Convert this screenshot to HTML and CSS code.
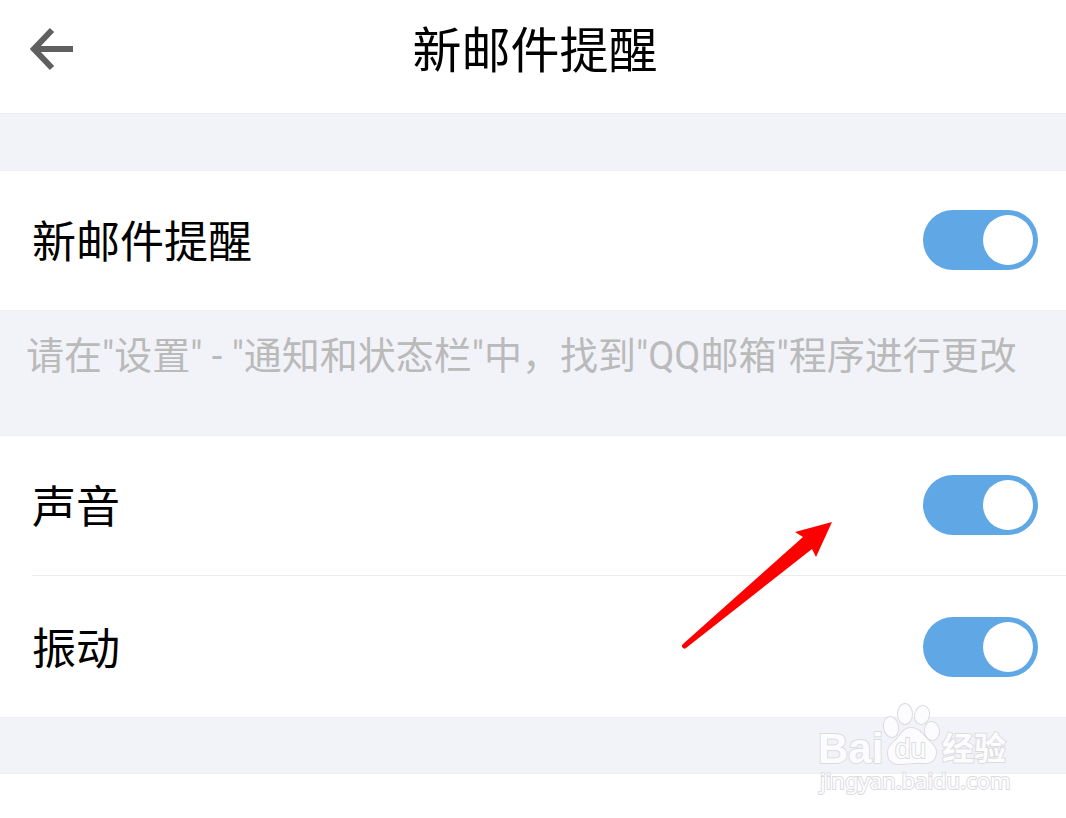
FILE: index.html
```html
<!DOCTYPE html>
<html lang="zh-CN">
<head>
<meta charset="utf-8">
<meta name="viewport" content="width=device-width, initial-scale=1">
<title>新邮件提醒</title>
<link rel="stylesheet" href="styles.css">
</head>
<body>
<div class="screen">
  <header class="header">
    <button class="back" type="button" aria-label="返回">
      <svg class="back-icon" viewBox="0 0 44 44" aria-hidden="true">
        <path d="M43 22H4M22 3L4 22l18 19" fill="none" stroke="#606060" stroke-width="6"/>
      </svg>
    </button>
    <h1 class="title">新邮件提醒</h1>
  </header>
  <main class="settings">
    <div class="band"></div>
    <div class="row">
      <label class="label" for="notify">新邮件提醒</label>
      <input class="switch" type="checkbox" id="notify" checked>
    </div>
    <p class="hint">请在"设置" - "通知和状态栏"中，找到"QQ邮箱"程序进行更改</p>
    <div class="row">
      <label class="label" for="sound">声音</label>
      <input class="switch" type="checkbox" id="sound" checked>
    </div>
    <div class="divider"></div>
    <div class="row row-last">
      <label class="label" for="vibrate">振动</label>
      <input class="switch" type="checkbox" id="vibrate" checked>
    </div>
    <div class="band band-end"></div>
  </main>
  <svg class="pointer" viewBox="0 0 152 128" aria-hidden="true">
    <path d="M151 0L114 10l8 5L2 122a2 2 0 0 0 3 4L131 27l4 8z" fill="#ff0000"/>
  </svg>
  <svg class="watermark" viewBox="0 0 200 100" role="img" aria-label="Baidu 经验">
    <g class="mark">
      <ellipse cx="75" cy="27" rx="7" ry="10" transform="rotate(-12 75 27)"/>
      <ellipse cx="89" cy="14" rx="7" ry="10"/>
      <ellipse cx="106" cy="15" rx="7" ry="9" transform="rotate(14 106 15)"/>
      <ellipse cx="116" cy="31" rx="7" ry="9" transform="rotate(-8 116 31)"/>
      <path d="M95 28c-7 0-10 6-14 11-5 5-9 7-9 14 0 8 5 11 12 11 8 0 15-2 22-1 9 1 14-3 14-11 0-6-5-9-10-14-4-5-8-10-15-10z"/>
      <text class="mark-bai" x="2" y="63">Bai</text>
      <text class="mark-du" x="79" y="58">du</text>
      <text class="mark-cn" x="126" y="60">经验</text>
      <text class="mark-url" x="4" y="89">jingyan.baidu.com</text>
    </g>
  </svg>
</div>
</body>
</html>
```
FILE: styles.css
```css
* {
  box-sizing: border-box;
}

body {
  margin: 0;
  background: #fff;
  color: #000;
  font-family: Roboto, "Noto Sans CJK SC", sans-serif;
}

.screen {
  position: relative;
  min-height: 100vh;
  overflow: hidden;
}

.header {
  display: grid;
  grid-template-columns: 1fr auto 1fr;
  align-items: center;
  padding: 0 26px 0 30px;
  height: 113px;
}

.back {
  display: flex;
  justify-self: start;
  margin-bottom: 16px;
  padding: 0;
  border: 0;
  background: none;
}

.back-icon {
  width: 44px;
  height: 44px;
}

.title {
  margin: 0 0 10px;
  font-size: 49px;
  font-weight: 400;
  line-height: 64px;
}

.band {
  height: 58px;
  background: #f2f3f8;
  border-top: 1px solid #eeeff0;
  border-bottom: 1px solid #eeeff0;
}

.band-end {
  height: 57px;
}

.row {
  display: flex;
  align-items: center;
  justify-content: space-between;
  padding: 0 28px 2px 32px;
  height: 139px;
}

.row-last {
  padding-bottom: 0;
  height: 141px;
}

.label {
  padding-top: 6px;
  font-size: 44px;
  line-height: 60px;
}

.switch {
  appearance: none;
  display: flex;
  align-items: center;
  justify-content: flex-end;
  margin: 0;
  padding: 5px;
  width: 115px;
  height: 60px;
  border-radius: 30px;
  background: #c8c8c8;
}

.switch::before {
  content: "";
  width: 50px;
  height: 50px;
  border-radius: 50%;
  background: #fff;
}

.switch:checked {
  background: #60a7e6;
}

.switch:not(:checked) {
  justify-content: flex-start;
}

.divider {
  margin-left: 32px;
  height: 1px;
  background: #ececec;
}

.hint {
  margin: 0;
  padding: 19px 26px 0;
  height: 126px;
  background: #f2f3f8;
  border-top: 1px solid #eeeff0;
  border-bottom: 1px solid #eeeff0;
  color: #bababa;
  font-size: 38px;
  line-height: 52px;
  white-space: nowrap;
}

.pointer {
  position: absolute;
  left: 681px;
  top: 522px;
  width: 152px;
  height: 128px;
}

.watermark {
  position: absolute;
  left: 816px;
  top: 700px;
  width: 200px;
  height: 100px;
}

.mark {
  fill: #fcfcfe;
  stroke: #dcdcdf;
  stroke-width: 2px;
  paint-order: stroke;
}

.mark-bai {
  font: 700 42px "Liberation Sans", sans-serif;
}

.mark-du {
  font: 400 28px "Liberation Sans", sans-serif;
}

.mark-cn {
  font: 700 32px "Noto Sans CJK SC", sans-serif;
}

.mark-url {
  font: 400 22px "Noto Sans", sans-serif;
}
```
